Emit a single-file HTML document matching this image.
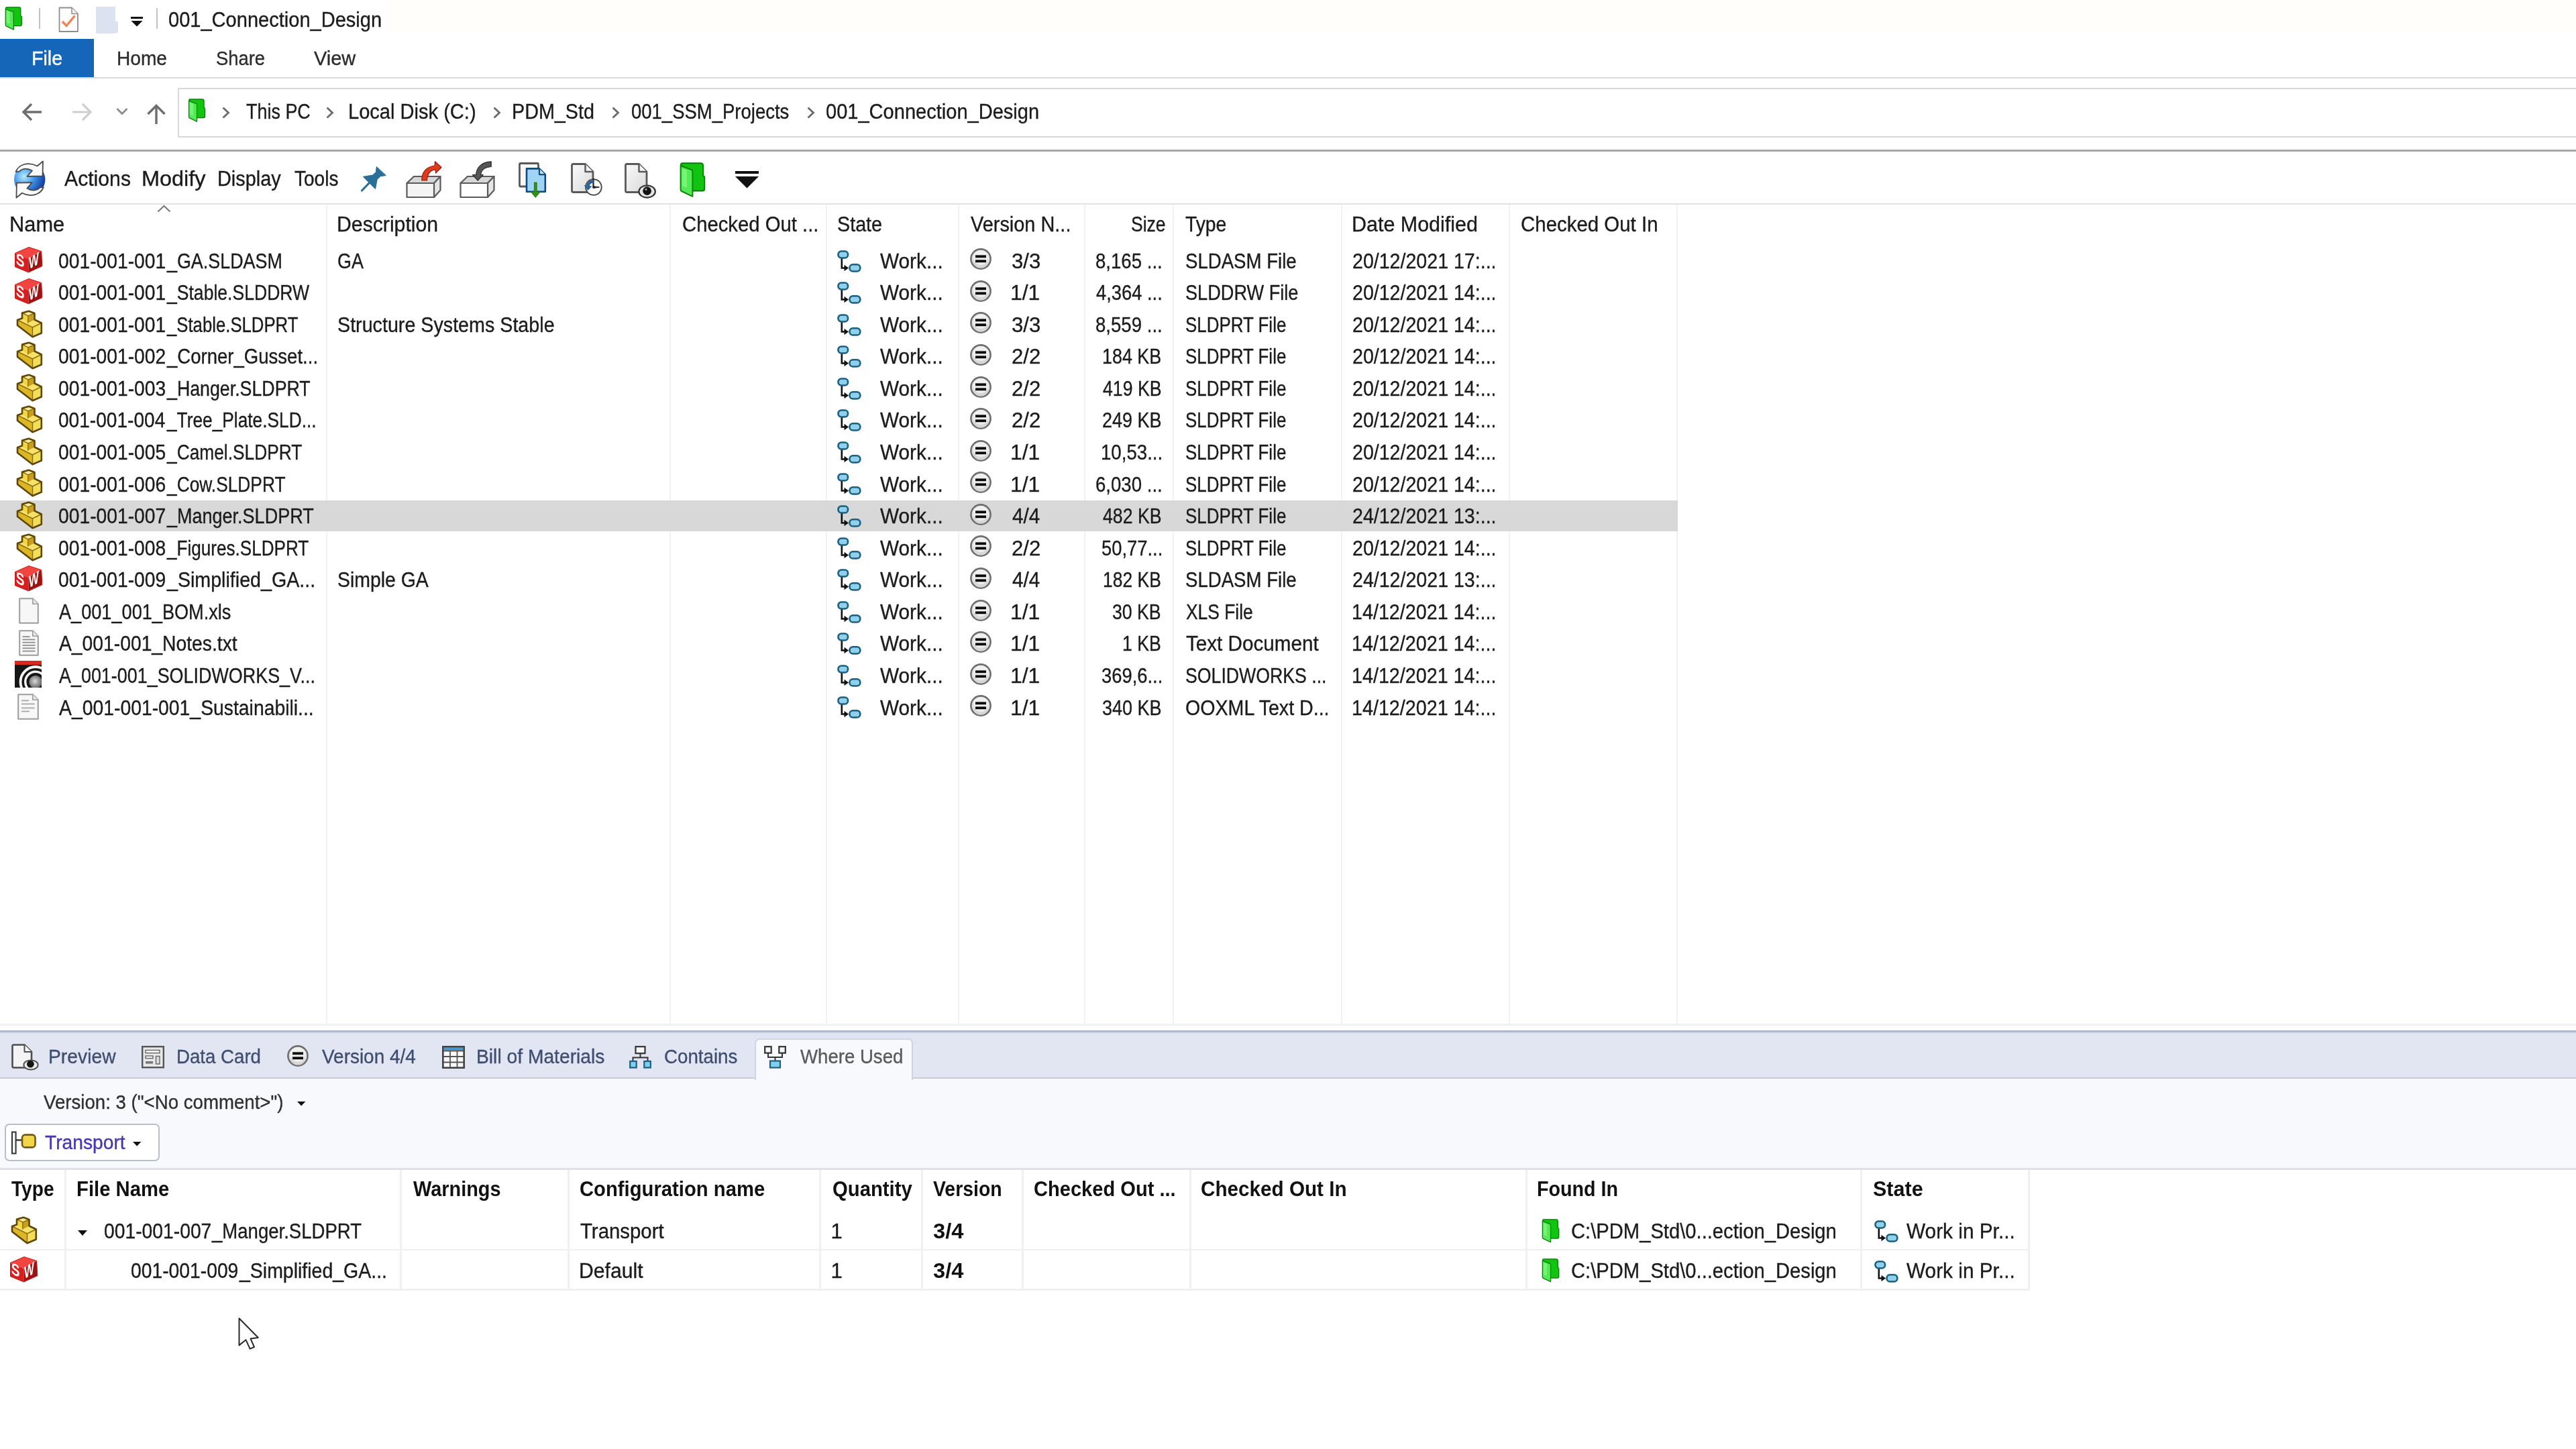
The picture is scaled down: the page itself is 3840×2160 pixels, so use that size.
<!DOCTYPE html>
<html lang="en"><head><meta charset="utf-8"><title>001_Connection_Design</title>
<style>
html,body{margin:0;padding:0;background:#fff;}
body{width:3840px;height:2160px;position:relative;overflow:hidden;font-family:"Liberation Sans", sans-serif;filter:blur(0.75px);}
div,svg,span{position:absolute;}
span{white-space:pre;line-height:1;transform-origin:0 0;-webkit-text-stroke:0.35px currentColor;}
svg{overflow:visible;}
svg text{font-family:"Liberation Sans", sans-serif;}
</style></head><body>
<div style="left:575px;top:0px;width:3265px;height:47px;background:#fffefb;"></div>
<svg style="left:6.5px;top:9.5px" width="26" height="35" viewBox="0 0 38 52"><path d="M4,1.2 H31.5 Q35,1.2 35,4.8 V19.5 L37.2,21.8 V39.5 Q37.2,42.6 34,42.6 H18 V12 L2,5.5 Q1.6,1.2 4,1.2 Z" fill="#10c410" stroke="#0a7a0a" stroke-width="2" stroke-linejoin="round"/><path d="M1.6,5 L17.6,11 Q19.4,11.8 19.4,14 V50.8 L3,43 Q1.6,42.2 1.6,40.4 Z" fill="#55ea55" stroke="#0b870b" stroke-width="2" stroke-linejoin="round"/><path d="M4,9 L11,11.8 V38 L4,35 Z" fill="#86f886" opacity="0.7"/></svg>
<div style="left:57.8px;top:12px;width:2px;height:30.5px;background:#c2c2c2;"></div>
<svg style="left:87px;top:10px" width="31" height="39" viewBox="0 0 31 39"><path d="M1.5,1.5 H20 L29,10.5 V37 H1.5 Z" fill="#fdfdfd" stroke="#8f8f8f" stroke-width="1.8" stroke-linejoin="round"/><path d="M20,1.5 V10.5 H29" fill="#f0f0f0" stroke="#8f8f8f" stroke-width="1.5"/><path d="M6,22 L12,28.5 L24.5,13.5" fill="none" stroke="#ee8558" stroke-width="3.4"/></svg>
<div style="left:143px;top:10px;width:29px;height:39.5px;background:#dde2f0;"></div>
<div style="left:167.5px;top:32.3px;width:8.2px;height:17.2px;background:#dde2f0;"></div>
<div style="left:195px;top:25px;width:18px;height:2.6px;background:#111;"></div>
<svg style="left:195px;top:31px" width="18" height="9" viewBox="0 0 18 9"><polygon points="0.5,0 17.5,0 9,8.5" fill="#111"/></svg>
<div style="left:232.8px;top:12px;width:2px;height:30.5px;background:#c2c2c2;"></div>
<div style="left:0px;top:58.4px;width:139.6px;height:56.6px;background:#1565b8;"></div>
<div style="left:0px;top:115px;width:3840px;height:2px;background:#dadada;"></div>
<div style="left:265px;top:130.5px;width:3600px;height:70.5px;border:2px solid #d9d9d9;background:#fff;box-sizing:content-box"></div>
<svg style="left:32px;top:152px" width="32" height="30" viewBox="0 0 32 30"><path d="M30,15 H3.5 M15,3 L3,15 L15,27" fill="none" stroke="#6e6e6e" stroke-width="3.4"/></svg>
<svg style="left:106px;top:152px" width="32" height="30" viewBox="0 0 32 30"><path d="M2,15 H28.5 M17,3 L29,15 L17,27" fill="none" stroke="#cfcfcf" stroke-width="3.2"/></svg>
<svg style="left:173px;top:160px" width="18" height="12" viewBox="0 0 18 12"><path d="M1.5,2 L9,9.5 L16.5,2" fill="none" stroke="#8c8c8c" stroke-width="2.8"/></svg>
<svg style="left:218px;top:154px" width="30" height="32" viewBox="0 0 30 32"><path d="M15,31 V4 M2.5,16 L15,3.5 L27.5,16" fill="none" stroke="#6e6e6e" stroke-width="3.4"/></svg>
<svg style="left:279.5px;top:147px" width="26.5" height="35" viewBox="0 0 38 52"><path d="M4,1.2 H31.5 Q35,1.2 35,4.8 V19.5 L37.2,21.8 V39.5 Q37.2,42.6 34,42.6 H18 V12 L2,5.5 Q1.6,1.2 4,1.2 Z" fill="#10c410" stroke="#0a7a0a" stroke-width="2" stroke-linejoin="round"/><path d="M1.6,5 L17.6,11 Q19.4,11.8 19.4,14 V50.8 L3,43 Q1.6,42.2 1.6,40.4 Z" fill="#55ea55" stroke="#0b870b" stroke-width="2" stroke-linejoin="round"/><path d="M4,9 L11,11.8 V38 L4,35 Z" fill="#86f886" opacity="0.7"/></svg>
<svg style="left:330.5px;top:158.5px" width="12" height="18" viewBox="0 0 12 18"><path d="M1.5,1.5 L9.5,9 L1.5,16.5" fill="none" stroke="#6a6a6a" stroke-width="2.8"/></svg>
<svg style="left:486px;top:158.5px" width="12" height="18" viewBox="0 0 12 18"><path d="M1.5,1.5 L9.5,9 L1.5,16.5" fill="none" stroke="#6a6a6a" stroke-width="2.8"/></svg>
<svg style="left:735px;top:158.5px" width="12" height="18" viewBox="0 0 12 18"><path d="M1.5,1.5 L9.5,9 L1.5,16.5" fill="none" stroke="#6a6a6a" stroke-width="2.8"/></svg>
<svg style="left:912px;top:158.5px" width="12" height="18" viewBox="0 0 12 18"><path d="M1.5,1.5 L9.5,9 L1.5,16.5" fill="none" stroke="#6a6a6a" stroke-width="2.8"/></svg>
<svg style="left:1203px;top:158.5px" width="12" height="18" viewBox="0 0 12 18"><path d="M1.5,1.5 L9.5,9 L1.5,16.5" fill="none" stroke="#6a6a6a" stroke-width="2.8"/></svg>
<div style="left:0px;top:223px;width:3840px;height:3px;background:#a8a8a8;"></div>
<svg style="left:20.3px;top:240.3px" width="48.5" height="55.3" viewBox="0 0 48.5 55.3"><defs><radialGradient id="gl" cx="0.32" cy="0.4" r="0.75"><stop offset="0" stop-color="#b8ecff"/><stop offset="0.45" stop-color="#3a94e6"/><stop offset="1" stop-color="#0c2a94"/></radialGradient></defs><circle cx="24.2" cy="27.6" r="23.2" fill="url(#gl)"/><path d="M3.5,16 C8,5 22,0.5 35.5,7.5 L44,0.5 L43.5,22.5 L20.5,23 L28,14.5 C21,10 13,11 9,15.5 Z" fill="#fbfbfb" stroke="#4a4a4a" stroke-width="1.8" stroke-linejoin="round"/><path d="M3.5,16 C8,5 22,0.5 35.5,7.5 L44,0.5 L43.5,22.5 L20.5,23 L28,14.5 C21,10 13,11 9,15.5 Z" fill="#fbfbfb" stroke="#4a4a4a" stroke-width="1.8" stroke-linejoin="round" transform="rotate(180 24.2 27.6)"/></svg>
<svg style="left:537.7px;top:247.7px" width="38" height="38" viewBox="0 0 38 38"><path d="M13.5,23.5 L1.5,36" stroke="#2a6f97" stroke-width="3.2" stroke-linecap="round"/><path d="M23.3,0.5 L37.3,13.5 L29,14.8 L24.2,19.6 L21.5,33.8 L3.3,15.4 L17.5,13 L22.3,8.6 Z" fill="#2a6f97" stroke="#2a6f97" stroke-width="1" stroke-linejoin="round"/></svg>
<svg style="left:605.2px;top:240.4px" width="54" height="55" viewBox="0 0 54 55"><polygon points="1.5,33 12,23 51.5,23 42,33" fill="#d6d6d6" stroke="#5a5a5a" stroke-width="2.2" stroke-linejoin="round"/><polygon points="42,33 51.5,23 51.5,43.5 42,54" fill="#e6e6e6" stroke="#5a5a5a" stroke-width="2.2" stroke-linejoin="round"/><polygon points="1.5,33 42,33 42,54 1.5,54" fill="#f4f4f4" stroke="#5a5a5a" stroke-width="2.2" stroke-linejoin="round"/><path d="M23.8,29 C23.5,17 30,8.5 43,7 L43.5,0.8 L53,9.5 L44.5,18 L44,12.8 C36,13.5 32,19 31.5,29 Z" fill="#e03a1c" stroke="#8e1e0c" stroke-width="1.2" stroke-linejoin="round"/></svg>
<svg style="left:685.3px;top:240.4px" width="54" height="55" viewBox="0 0 54 55"><polygon points="1.5,33 12,23 51.5,23 42,33" fill="#d6d6d6" stroke="#5a5a5a" stroke-width="2.2" stroke-linejoin="round"/><polygon points="42,33 51.5,23 51.5,43.5 42,54" fill="#e6e6e6" stroke="#5a5a5a" stroke-width="2.2" stroke-linejoin="round"/><polygon points="1.5,33 42,33 42,54 1.5,54" fill="#ffffff" stroke="#5a5a5a" stroke-width="2.2" stroke-linejoin="round"/><path d="M47.2,0.8 C34,1 25.5,9 24.5,20.5 L19.5,20.5 L27.2,29 L35.2,20.5 L31.5,20.5 C32.5,13.5 38,9 47.2,8.5 Z" fill="#555" stroke="#2c2c2c" stroke-width="1.2" stroke-linejoin="round"/></svg>
<svg style="left:772.5px;top:242px" width="41.5" height="53" viewBox="0 0 41.5 53"><rect x="1.5" y="1.5" width="28" height="34.5" rx="1.5" fill="#f7f7f7" stroke="#585858" stroke-width="2.8"/><path d="M12,9.4 H31 L39.8,18.2 V43.8 H12 Z" fill="#9fd4f5" stroke="#0d4c7c" stroke-width="2.6" stroke-linejoin="round"/><path d="M31,9.4 V18.2 H39.8" fill="#c9e8fa" stroke="#0d4c7c" stroke-width="2.2" stroke-linejoin="round"/><path d="M23.4,30 H27.2 V44 H32.4 L25.3,52.4 L18.2,44 H23.4 Z" fill="#2f9212" stroke="#246f0e" stroke-width="0.8"/></svg>
<svg style="left:851px;top:242.5px" width="48" height="52" viewBox="0 0 48 52"><defs><linearGradient id="dg" x1="0" y1="0" x2="1" y2="1"><stop offset="0" stop-color="#fafafa"/><stop offset="1" stop-color="#d9d9d9"/></linearGradient></defs><path d="M3.5,1.5 H21.5 L33,13 V41 Q33,43.5 30.5,43.5 H3.5 Q1.5,43.5 1.5,41.5 V3.5 Q1.5,1.5 3.5,1.5 Z" fill="url(#dg)" stroke="#595959" stroke-width="2.8" stroke-linejoin="round"/><path d="M21.5,1.5 V13 H33" fill="#f4f4f4" stroke="#595959" stroke-width="2.4" stroke-linejoin="round"/><circle cx="33.9" cy="36" r="11.8" fill="#fdfdfd" stroke="#4c4c4c" stroke-width="2"/><path d="M33.5,23 V36.5" fill="none" stroke="#222" stroke-width="2.2"/><path d="M33,34.6 L42.5,36 L33,37.6 Z" fill="#222" stroke="#222" stroke-width="1"/><path d="M33.5,25.5 C28.5,25 24.5,28.5 23.5,33.5 L19.5,33 L25.5,41 L31.5,34.5 L27.8,34 C28.3,31.5 30.5,29.8 33.5,29.8 Z" fill="#2a6498"/></svg>
<svg style="left:931px;top:242.5px" width="48" height="53" viewBox="0 0 48 53"><defs><linearGradient id="dg2" x1="0" y1="0" x2="1" y2="1"><stop offset="0" stop-color="#fafafa"/><stop offset="1" stop-color="#d9d9d9"/></linearGradient></defs><path d="M3.5,1.5 H21.5 L33,13 V41 Q33,43.5 30.5,43.5 H3.5 Q1.5,43.5 1.5,41.5 V3.5 Q1.5,1.5 3.5,1.5 Z" fill="url(#dg2)" stroke="#595959" stroke-width="2.8" stroke-linejoin="round"/><path d="M21.5,1.5 V13 H33" fill="#f4f4f4" stroke="#595959" stroke-width="2.4" stroke-linejoin="round"/><ellipse cx="33.6" cy="42.5" rx="12.2" ry="9" fill="#f4f4f4" stroke="#3c3c3c" stroke-width="2.4"/><ellipse cx="33.6" cy="42.5" rx="9.5" ry="6.2" fill="#e0e0e0"/><circle cx="33.6" cy="41.6" r="6.3" fill="#111"/><circle cx="32" cy="39.4" r="1.6" fill="#999"/></svg>
<svg style="left:1012.7px;top:242.1px" width="38" height="52" viewBox="0 0 38 52"><path d="M4,1.2 H31.5 Q35,1.2 35,4.8 V19.5 L37.2,21.8 V39.5 Q37.2,42.6 34,42.6 H18 V12 L2,5.5 Q1.6,1.2 4,1.2 Z" fill="#10c410" stroke="#0a7a0a" stroke-width="2" stroke-linejoin="round"/><path d="M1.6,5 L17.6,11 Q19.4,11.8 19.4,14 V50.8 L3,43 Q1.6,42.2 1.6,40.4 Z" fill="#55ea55" stroke="#0b870b" stroke-width="2" stroke-linejoin="round"/><path d="M4,9 L11,11.8 V38 L4,35 Z" fill="#86f886" opacity="0.7"/></svg>
<div style="left:1096px;top:255px;width:35px;height:3.6px;background:#111;"></div>
<svg style="left:1096px;top:262.8px" width="35" height="17.5" viewBox="0 0 35 17.5"><polygon points="0,0 35,0 17.5,17.5" fill="#111"/></svg>
<div style="left:0px;top:302.6px;width:3840px;height:2px;background:#e3e3e3;"></div>
<div style="left:485.5px;top:305px;width:2px;height:1221px;background:#f1f1f6;"></div>
<div style="left:997.5px;top:305px;width:2px;height:1221px;background:#f1f1f6;"></div>
<div style="left:1230.5px;top:305px;width:2px;height:1221px;background:#f1f1f6;"></div>
<div style="left:1428px;top:305px;width:2px;height:1221px;background:#f1f1f6;"></div>
<div style="left:1615.5px;top:305px;width:2px;height:1221px;background:#f1f1f6;"></div>
<div style="left:1748px;top:305px;width:2px;height:1221px;background:#f1f1f6;"></div>
<div style="left:1998.5px;top:305px;width:2px;height:1221px;background:#f1f1f6;"></div>
<div style="left:2248.5px;top:305px;width:2px;height:1221px;background:#f1f1f6;"></div>
<div style="left:2498.5px;top:305px;width:2px;height:1221px;background:#f1f1f6;"></div>
<svg style="left:234px;top:305px" width="21" height="12" viewBox="0 0 21 12"><path d="M1.5,10.5 L10.5,2 L19.5,10.5" fill="none" stroke="#7a7a7a" stroke-width="2.2"/></svg>
<div style="left:0px;top:745.6px;width:2501px;height:46.8px;background:#d8d8d8;"></div>
<svg style="left:22px;top:367.70000000000005px" width="41.5" height="38.7" viewBox="0 0 41.5 38.7"><polygon points="0.5,9.4 21,0.5 39.7,6.6 20.4,17.7" fill="#f2453f"/><polygon points="0.5,9.4 20.4,17.7 20.4,38 0.5,29.8" fill="#d81e1e"/><polygon points="20.4,17.7 39.7,6.6 40.8,28.7 20.4,38" fill="#9e1212"/><polygon points="0.5,9.4 21,0.5 39.7,6.6 40.8,28.7 20.4,38 0.5,29.8" fill="none" stroke="#c41a1a" stroke-width="1" stroke-linejoin="round"/><text x="2.2" y="26.5" font-size="24.5" font-weight="700" fill="#fff" transform="matrix(0.78,0.33,0,1,0,-1.5)">S</text><text x="26.5" y="42.8" font-size="25.5" font-weight="700" fill="#fff" transform="matrix(0.62,-0.36,0,1,4.6,0.5)">W</text></svg>
<svg style="left:1248.2px;top:372.5px" width="36" height="33" viewBox="0 0 36 33"><path d="M6.8,12 V26.5 H12" fill="none" stroke="#111" stroke-width="2.6"/><polygon points="10.5,21.8 17,26.5 10.5,31.2" fill="#111"/><rect x="1.5" y="1.5" width="14.5" height="10" rx="4.5" ry="4.5" fill="#8fd0ec" stroke="#1d607e" stroke-width="2.6"/><rect x="18.5" y="21.2" width="15.8" height="10.3" rx="4.8" ry="4.8" fill="#8fd0ec" stroke="#1d607e" stroke-width="2.6"/></svg>
<svg style="left:1446.2px;top:370.3px" width="32" height="32" viewBox="0 0 32 32"><circle cx="16.0" cy="16.0" r="14.6" fill="#e4e4e4" stroke="#6f6f6f" stroke-width="2.6"/><circle cx="16.0" cy="19.0" r="11.0" fill="#cfcfcf" opacity="0.6"/><circle cx="16.0" cy="14.0" r="11.0" fill="#f2f2f2" opacity="0.8"/><rect x="8.0" y="10.4" width="16" height="3.8" fill="#0a0a0a"/><rect x="8.0" y="17.4" width="16" height="3.8" fill="#0a0a0a"/></svg>
<svg style="left:22px;top:415.27000000000004px" width="41.5" height="38.7" viewBox="0 0 41.5 38.7"><polygon points="0.5,9.4 21,0.5 39.7,6.6 20.4,17.7" fill="#f2453f"/><polygon points="0.5,9.4 20.4,17.7 20.4,38 0.5,29.8" fill="#d81e1e"/><polygon points="20.4,17.7 39.7,6.6 40.8,28.7 20.4,38" fill="#9e1212"/><polygon points="0.5,9.4 21,0.5 39.7,6.6 40.8,28.7 20.4,38 0.5,29.8" fill="none" stroke="#c41a1a" stroke-width="1" stroke-linejoin="round"/><text x="2.2" y="26.5" font-size="24.5" font-weight="700" fill="#fff" transform="matrix(0.78,0.33,0,1,0,-1.5)">S</text><text x="26.5" y="42.8" font-size="25.5" font-weight="700" fill="#fff" transform="matrix(0.62,-0.36,0,1,4.6,0.5)">W</text></svg>
<svg style="left:1248.2px;top:420.07px" width="36" height="33" viewBox="0 0 36 33"><path d="M6.8,12 V26.5 H12" fill="none" stroke="#111" stroke-width="2.6"/><polygon points="10.5,21.8 17,26.5 10.5,31.2" fill="#111"/><rect x="1.5" y="1.5" width="14.5" height="10" rx="4.5" ry="4.5" fill="#8fd0ec" stroke="#1d607e" stroke-width="2.6"/><rect x="18.5" y="21.2" width="15.8" height="10.3" rx="4.8" ry="4.8" fill="#8fd0ec" stroke="#1d607e" stroke-width="2.6"/></svg>
<svg style="left:1446.2px;top:417.87px" width="32" height="32" viewBox="0 0 32 32"><circle cx="16.0" cy="16.0" r="14.6" fill="#e4e4e4" stroke="#6f6f6f" stroke-width="2.6"/><circle cx="16.0" cy="19.0" r="11.0" fill="#cfcfcf" opacity="0.6"/><circle cx="16.0" cy="14.0" r="11.0" fill="#f2f2f2" opacity="0.8"/><rect x="8.0" y="10.4" width="16" height="3.8" fill="#0a0a0a"/><rect x="8.0" y="17.4" width="16" height="3.8" fill="#0a0a0a"/></svg>
<svg style="left:24.6px;top:462.64px" width="38" height="40" viewBox="0 0 38 40"><polygon points="8,3.5 18,0.8 26.5,4 26.5,13.5 36.8,18.5 36.8,33.5 23.5,39.2 1,22 1,14 8,11.5" fill="#e6c52c"/><polygon points="8,3.5 18,0.8 26.5,4 16.8,7.8" fill="#f8ec9a"/><polygon points="16.8,7.8 26.5,4 26.5,13.5 16.8,18.5" fill="#c99e1a"/><polygon points="8,3.5 16.8,7.8 16.8,18.5 8,13" fill="#f0d545"/><polygon points="1,14 8,12 16.8,18.5 26.5,13.5 36.8,18.5 23.5,25" fill="#f5e26a"/><polygon points="23.5,25 36.8,18.5 36.8,33.5 23.5,39.2" fill="#f3de58"/><polygon points="1,14 23.5,25 23.5,39.2 1,22" fill="#dcb625"/><path d="M23.5,25 L23.5,39 M1,14 L23.5,25 L36.8,18.5 M16.8,7.8 L16.8,18.5 M8,3.5 L16.8,7.8 L26.5,4" fill="none" stroke="#8a6a10" stroke-width="1.4"/><polygon points="8,3.5 18,0.8 26.5,4 26.5,13.5 36.8,18.5 36.8,33.5 23.5,39.2 1,22 1,14 8,11.5" fill="none" stroke="#5f4708" stroke-width="2.6" stroke-linejoin="round"/></svg>
<svg style="left:1248.2px;top:467.64px" width="36" height="33" viewBox="0 0 36 33"><path d="M6.8,12 V26.5 H12" fill="none" stroke="#111" stroke-width="2.6"/><polygon points="10.5,21.8 17,26.5 10.5,31.2" fill="#111"/><rect x="1.5" y="1.5" width="14.5" height="10" rx="4.5" ry="4.5" fill="#8fd0ec" stroke="#1d607e" stroke-width="2.6"/><rect x="18.5" y="21.2" width="15.8" height="10.3" rx="4.8" ry="4.8" fill="#8fd0ec" stroke="#1d607e" stroke-width="2.6"/></svg>
<svg style="left:1446.2px;top:465.44px" width="32" height="32" viewBox="0 0 32 32"><circle cx="16.0" cy="16.0" r="14.6" fill="#e4e4e4" stroke="#6f6f6f" stroke-width="2.6"/><circle cx="16.0" cy="19.0" r="11.0" fill="#cfcfcf" opacity="0.6"/><circle cx="16.0" cy="14.0" r="11.0" fill="#f2f2f2" opacity="0.8"/><rect x="8.0" y="10.4" width="16" height="3.8" fill="#0a0a0a"/><rect x="8.0" y="17.4" width="16" height="3.8" fill="#0a0a0a"/></svg>
<svg style="left:24.6px;top:510.2099999999999px" width="38" height="40" viewBox="0 0 38 40"><polygon points="8,3.5 18,0.8 26.5,4 26.5,13.5 36.8,18.5 36.8,33.5 23.5,39.2 1,22 1,14 8,11.5" fill="#e6c52c"/><polygon points="8,3.5 18,0.8 26.5,4 16.8,7.8" fill="#f8ec9a"/><polygon points="16.8,7.8 26.5,4 26.5,13.5 16.8,18.5" fill="#c99e1a"/><polygon points="8,3.5 16.8,7.8 16.8,18.5 8,13" fill="#f0d545"/><polygon points="1,14 8,12 16.8,18.5 26.5,13.5 36.8,18.5 23.5,25" fill="#f5e26a"/><polygon points="23.5,25 36.8,18.5 36.8,33.5 23.5,39.2" fill="#f3de58"/><polygon points="1,14 23.5,25 23.5,39.2 1,22" fill="#dcb625"/><path d="M23.5,25 L23.5,39 M1,14 L23.5,25 L36.8,18.5 M16.8,7.8 L16.8,18.5 M8,3.5 L16.8,7.8 L26.5,4" fill="none" stroke="#8a6a10" stroke-width="1.4"/><polygon points="8,3.5 18,0.8 26.5,4 26.5,13.5 36.8,18.5 36.8,33.5 23.5,39.2 1,22 1,14 8,11.5" fill="none" stroke="#5f4708" stroke-width="2.6" stroke-linejoin="round"/></svg>
<svg style="left:1248.2px;top:515.2099999999999px" width="36" height="33" viewBox="0 0 36 33"><path d="M6.8,12 V26.5 H12" fill="none" stroke="#111" stroke-width="2.6"/><polygon points="10.5,21.8 17,26.5 10.5,31.2" fill="#111"/><rect x="1.5" y="1.5" width="14.5" height="10" rx="4.5" ry="4.5" fill="#8fd0ec" stroke="#1d607e" stroke-width="2.6"/><rect x="18.5" y="21.2" width="15.8" height="10.3" rx="4.8" ry="4.8" fill="#8fd0ec" stroke="#1d607e" stroke-width="2.6"/></svg>
<svg style="left:1446.2px;top:513.01px" width="32" height="32" viewBox="0 0 32 32"><circle cx="16.0" cy="16.0" r="14.6" fill="#e4e4e4" stroke="#6f6f6f" stroke-width="2.6"/><circle cx="16.0" cy="19.0" r="11.0" fill="#cfcfcf" opacity="0.6"/><circle cx="16.0" cy="14.0" r="11.0" fill="#f2f2f2" opacity="0.8"/><rect x="8.0" y="10.4" width="16" height="3.8" fill="#0a0a0a"/><rect x="8.0" y="17.4" width="16" height="3.8" fill="#0a0a0a"/></svg>
<svg style="left:24.6px;top:557.78px" width="38" height="40" viewBox="0 0 38 40"><polygon points="8,3.5 18,0.8 26.5,4 26.5,13.5 36.8,18.5 36.8,33.5 23.5,39.2 1,22 1,14 8,11.5" fill="#e6c52c"/><polygon points="8,3.5 18,0.8 26.5,4 16.8,7.8" fill="#f8ec9a"/><polygon points="16.8,7.8 26.5,4 26.5,13.5 16.8,18.5" fill="#c99e1a"/><polygon points="8,3.5 16.8,7.8 16.8,18.5 8,13" fill="#f0d545"/><polygon points="1,14 8,12 16.8,18.5 26.5,13.5 36.8,18.5 23.5,25" fill="#f5e26a"/><polygon points="23.5,25 36.8,18.5 36.8,33.5 23.5,39.2" fill="#f3de58"/><polygon points="1,14 23.5,25 23.5,39.2 1,22" fill="#dcb625"/><path d="M23.5,25 L23.5,39 M1,14 L23.5,25 L36.8,18.5 M16.8,7.8 L16.8,18.5 M8,3.5 L16.8,7.8 L26.5,4" fill="none" stroke="#8a6a10" stroke-width="1.4"/><polygon points="8,3.5 18,0.8 26.5,4 26.5,13.5 36.8,18.5 36.8,33.5 23.5,39.2 1,22 1,14 8,11.5" fill="none" stroke="#5f4708" stroke-width="2.6" stroke-linejoin="round"/></svg>
<svg style="left:1248.2px;top:562.78px" width="36" height="33" viewBox="0 0 36 33"><path d="M6.8,12 V26.5 H12" fill="none" stroke="#111" stroke-width="2.6"/><polygon points="10.5,21.8 17,26.5 10.5,31.2" fill="#111"/><rect x="1.5" y="1.5" width="14.5" height="10" rx="4.5" ry="4.5" fill="#8fd0ec" stroke="#1d607e" stroke-width="2.6"/><rect x="18.5" y="21.2" width="15.8" height="10.3" rx="4.8" ry="4.8" fill="#8fd0ec" stroke="#1d607e" stroke-width="2.6"/></svg>
<svg style="left:1446.2px;top:560.58px" width="32" height="32" viewBox="0 0 32 32"><circle cx="16.0" cy="16.0" r="14.6" fill="#e4e4e4" stroke="#6f6f6f" stroke-width="2.6"/><circle cx="16.0" cy="19.0" r="11.0" fill="#cfcfcf" opacity="0.6"/><circle cx="16.0" cy="14.0" r="11.0" fill="#f2f2f2" opacity="0.8"/><rect x="8.0" y="10.4" width="16" height="3.8" fill="#0a0a0a"/><rect x="8.0" y="17.4" width="16" height="3.8" fill="#0a0a0a"/></svg>
<svg style="left:24.6px;top:605.3499999999999px" width="38" height="40" viewBox="0 0 38 40"><polygon points="8,3.5 18,0.8 26.5,4 26.5,13.5 36.8,18.5 36.8,33.5 23.5,39.2 1,22 1,14 8,11.5" fill="#e6c52c"/><polygon points="8,3.5 18,0.8 26.5,4 16.8,7.8" fill="#f8ec9a"/><polygon points="16.8,7.8 26.5,4 26.5,13.5 16.8,18.5" fill="#c99e1a"/><polygon points="8,3.5 16.8,7.8 16.8,18.5 8,13" fill="#f0d545"/><polygon points="1,14 8,12 16.8,18.5 26.5,13.5 36.8,18.5 23.5,25" fill="#f5e26a"/><polygon points="23.5,25 36.8,18.5 36.8,33.5 23.5,39.2" fill="#f3de58"/><polygon points="1,14 23.5,25 23.5,39.2 1,22" fill="#dcb625"/><path d="M23.5,25 L23.5,39 M1,14 L23.5,25 L36.8,18.5 M16.8,7.8 L16.8,18.5 M8,3.5 L16.8,7.8 L26.5,4" fill="none" stroke="#8a6a10" stroke-width="1.4"/><polygon points="8,3.5 18,0.8 26.5,4 26.5,13.5 36.8,18.5 36.8,33.5 23.5,39.2 1,22 1,14 8,11.5" fill="none" stroke="#5f4708" stroke-width="2.6" stroke-linejoin="round"/></svg>
<svg style="left:1248.2px;top:610.3499999999999px" width="36" height="33" viewBox="0 0 36 33"><path d="M6.8,12 V26.5 H12" fill="none" stroke="#111" stroke-width="2.6"/><polygon points="10.5,21.8 17,26.5 10.5,31.2" fill="#111"/><rect x="1.5" y="1.5" width="14.5" height="10" rx="4.5" ry="4.5" fill="#8fd0ec" stroke="#1d607e" stroke-width="2.6"/><rect x="18.5" y="21.2" width="15.8" height="10.3" rx="4.8" ry="4.8" fill="#8fd0ec" stroke="#1d607e" stroke-width="2.6"/></svg>
<svg style="left:1446.2px;top:608.15px" width="32" height="32" viewBox="0 0 32 32"><circle cx="16.0" cy="16.0" r="14.6" fill="#e4e4e4" stroke="#6f6f6f" stroke-width="2.6"/><circle cx="16.0" cy="19.0" r="11.0" fill="#cfcfcf" opacity="0.6"/><circle cx="16.0" cy="14.0" r="11.0" fill="#f2f2f2" opacity="0.8"/><rect x="8.0" y="10.4" width="16" height="3.8" fill="#0a0a0a"/><rect x="8.0" y="17.4" width="16" height="3.8" fill="#0a0a0a"/></svg>
<svg style="left:24.6px;top:652.92px" width="38" height="40" viewBox="0 0 38 40"><polygon points="8,3.5 18,0.8 26.5,4 26.5,13.5 36.8,18.5 36.8,33.5 23.5,39.2 1,22 1,14 8,11.5" fill="#e6c52c"/><polygon points="8,3.5 18,0.8 26.5,4 16.8,7.8" fill="#f8ec9a"/><polygon points="16.8,7.8 26.5,4 26.5,13.5 16.8,18.5" fill="#c99e1a"/><polygon points="8,3.5 16.8,7.8 16.8,18.5 8,13" fill="#f0d545"/><polygon points="1,14 8,12 16.8,18.5 26.5,13.5 36.8,18.5 23.5,25" fill="#f5e26a"/><polygon points="23.5,25 36.8,18.5 36.8,33.5 23.5,39.2" fill="#f3de58"/><polygon points="1,14 23.5,25 23.5,39.2 1,22" fill="#dcb625"/><path d="M23.5,25 L23.5,39 M1,14 L23.5,25 L36.8,18.5 M16.8,7.8 L16.8,18.5 M8,3.5 L16.8,7.8 L26.5,4" fill="none" stroke="#8a6a10" stroke-width="1.4"/><polygon points="8,3.5 18,0.8 26.5,4 26.5,13.5 36.8,18.5 36.8,33.5 23.5,39.2 1,22 1,14 8,11.5" fill="none" stroke="#5f4708" stroke-width="2.6" stroke-linejoin="round"/></svg>
<svg style="left:1248.2px;top:657.92px" width="36" height="33" viewBox="0 0 36 33"><path d="M6.8,12 V26.5 H12" fill="none" stroke="#111" stroke-width="2.6"/><polygon points="10.5,21.8 17,26.5 10.5,31.2" fill="#111"/><rect x="1.5" y="1.5" width="14.5" height="10" rx="4.5" ry="4.5" fill="#8fd0ec" stroke="#1d607e" stroke-width="2.6"/><rect x="18.5" y="21.2" width="15.8" height="10.3" rx="4.8" ry="4.8" fill="#8fd0ec" stroke="#1d607e" stroke-width="2.6"/></svg>
<svg style="left:1446.2px;top:655.72px" width="32" height="32" viewBox="0 0 32 32"><circle cx="16.0" cy="16.0" r="14.6" fill="#e4e4e4" stroke="#6f6f6f" stroke-width="2.6"/><circle cx="16.0" cy="19.0" r="11.0" fill="#cfcfcf" opacity="0.6"/><circle cx="16.0" cy="14.0" r="11.0" fill="#f2f2f2" opacity="0.8"/><rect x="8.0" y="10.4" width="16" height="3.8" fill="#0a0a0a"/><rect x="8.0" y="17.4" width="16" height="3.8" fill="#0a0a0a"/></svg>
<svg style="left:24.6px;top:700.4899999999999px" width="38" height="40" viewBox="0 0 38 40"><polygon points="8,3.5 18,0.8 26.5,4 26.5,13.5 36.8,18.5 36.8,33.5 23.5,39.2 1,22 1,14 8,11.5" fill="#e6c52c"/><polygon points="8,3.5 18,0.8 26.5,4 16.8,7.8" fill="#f8ec9a"/><polygon points="16.8,7.8 26.5,4 26.5,13.5 16.8,18.5" fill="#c99e1a"/><polygon points="8,3.5 16.8,7.8 16.8,18.5 8,13" fill="#f0d545"/><polygon points="1,14 8,12 16.8,18.5 26.5,13.5 36.8,18.5 23.5,25" fill="#f5e26a"/><polygon points="23.5,25 36.8,18.5 36.8,33.5 23.5,39.2" fill="#f3de58"/><polygon points="1,14 23.5,25 23.5,39.2 1,22" fill="#dcb625"/><path d="M23.5,25 L23.5,39 M1,14 L23.5,25 L36.8,18.5 M16.8,7.8 L16.8,18.5 M8,3.5 L16.8,7.8 L26.5,4" fill="none" stroke="#8a6a10" stroke-width="1.4"/><polygon points="8,3.5 18,0.8 26.5,4 26.5,13.5 36.8,18.5 36.8,33.5 23.5,39.2 1,22 1,14 8,11.5" fill="none" stroke="#5f4708" stroke-width="2.6" stroke-linejoin="round"/></svg>
<svg style="left:1248.2px;top:705.4899999999999px" width="36" height="33" viewBox="0 0 36 33"><path d="M6.8,12 V26.5 H12" fill="none" stroke="#111" stroke-width="2.6"/><polygon points="10.5,21.8 17,26.5 10.5,31.2" fill="#111"/><rect x="1.5" y="1.5" width="14.5" height="10" rx="4.5" ry="4.5" fill="#8fd0ec" stroke="#1d607e" stroke-width="2.6"/><rect x="18.5" y="21.2" width="15.8" height="10.3" rx="4.8" ry="4.8" fill="#8fd0ec" stroke="#1d607e" stroke-width="2.6"/></svg>
<svg style="left:1446.2px;top:703.29px" width="32" height="32" viewBox="0 0 32 32"><circle cx="16.0" cy="16.0" r="14.6" fill="#e4e4e4" stroke="#6f6f6f" stroke-width="2.6"/><circle cx="16.0" cy="19.0" r="11.0" fill="#cfcfcf" opacity="0.6"/><circle cx="16.0" cy="14.0" r="11.0" fill="#f2f2f2" opacity="0.8"/><rect x="8.0" y="10.4" width="16" height="3.8" fill="#0a0a0a"/><rect x="8.0" y="17.4" width="16" height="3.8" fill="#0a0a0a"/></svg>
<svg style="left:24.6px;top:748.06px" width="38" height="40" viewBox="0 0 38 40"><polygon points="8,3.5 18,0.8 26.5,4 26.5,13.5 36.8,18.5 36.8,33.5 23.5,39.2 1,22 1,14 8,11.5" fill="#e6c52c"/><polygon points="8,3.5 18,0.8 26.5,4 16.8,7.8" fill="#f8ec9a"/><polygon points="16.8,7.8 26.5,4 26.5,13.5 16.8,18.5" fill="#c99e1a"/><polygon points="8,3.5 16.8,7.8 16.8,18.5 8,13" fill="#f0d545"/><polygon points="1,14 8,12 16.8,18.5 26.5,13.5 36.8,18.5 23.5,25" fill="#f5e26a"/><polygon points="23.5,25 36.8,18.5 36.8,33.5 23.5,39.2" fill="#f3de58"/><polygon points="1,14 23.5,25 23.5,39.2 1,22" fill="#dcb625"/><path d="M23.5,25 L23.5,39 M1,14 L23.5,25 L36.8,18.5 M16.8,7.8 L16.8,18.5 M8,3.5 L16.8,7.8 L26.5,4" fill="none" stroke="#8a6a10" stroke-width="1.4"/><polygon points="8,3.5 18,0.8 26.5,4 26.5,13.5 36.8,18.5 36.8,33.5 23.5,39.2 1,22 1,14 8,11.5" fill="none" stroke="#5f4708" stroke-width="2.6" stroke-linejoin="round"/></svg>
<svg style="left:1248.2px;top:753.06px" width="36" height="33" viewBox="0 0 36 33"><path d="M6.8,12 V26.5 H12" fill="none" stroke="#111" stroke-width="2.6"/><polygon points="10.5,21.8 17,26.5 10.5,31.2" fill="#111"/><rect x="1.5" y="1.5" width="14.5" height="10" rx="4.5" ry="4.5" fill="#8fd0ec" stroke="#1d607e" stroke-width="2.6"/><rect x="18.5" y="21.2" width="15.8" height="10.3" rx="4.8" ry="4.8" fill="#8fd0ec" stroke="#1d607e" stroke-width="2.6"/></svg>
<svg style="left:1446.2px;top:750.86px" width="32" height="32" viewBox="0 0 32 32"><circle cx="16.0" cy="16.0" r="14.6" fill="#e4e4e4" stroke="#6f6f6f" stroke-width="2.6"/><circle cx="16.0" cy="19.0" r="11.0" fill="#cfcfcf" opacity="0.6"/><circle cx="16.0" cy="14.0" r="11.0" fill="#f2f2f2" opacity="0.8"/><rect x="8.0" y="10.4" width="16" height="3.8" fill="#0a0a0a"/><rect x="8.0" y="17.4" width="16" height="3.8" fill="#0a0a0a"/></svg>
<svg style="left:24.6px;top:795.63px" width="38" height="40" viewBox="0 0 38 40"><polygon points="8,3.5 18,0.8 26.5,4 26.5,13.5 36.8,18.5 36.8,33.5 23.5,39.2 1,22 1,14 8,11.5" fill="#e6c52c"/><polygon points="8,3.5 18,0.8 26.5,4 16.8,7.8" fill="#f8ec9a"/><polygon points="16.8,7.8 26.5,4 26.5,13.5 16.8,18.5" fill="#c99e1a"/><polygon points="8,3.5 16.8,7.8 16.8,18.5 8,13" fill="#f0d545"/><polygon points="1,14 8,12 16.8,18.5 26.5,13.5 36.8,18.5 23.5,25" fill="#f5e26a"/><polygon points="23.5,25 36.8,18.5 36.8,33.5 23.5,39.2" fill="#f3de58"/><polygon points="1,14 23.5,25 23.5,39.2 1,22" fill="#dcb625"/><path d="M23.5,25 L23.5,39 M1,14 L23.5,25 L36.8,18.5 M16.8,7.8 L16.8,18.5 M8,3.5 L16.8,7.8 L26.5,4" fill="none" stroke="#8a6a10" stroke-width="1.4"/><polygon points="8,3.5 18,0.8 26.5,4 26.5,13.5 36.8,18.5 36.8,33.5 23.5,39.2 1,22 1,14 8,11.5" fill="none" stroke="#5f4708" stroke-width="2.6" stroke-linejoin="round"/></svg>
<svg style="left:1248.2px;top:800.63px" width="36" height="33" viewBox="0 0 36 33"><path d="M6.8,12 V26.5 H12" fill="none" stroke="#111" stroke-width="2.6"/><polygon points="10.5,21.8 17,26.5 10.5,31.2" fill="#111"/><rect x="1.5" y="1.5" width="14.5" height="10" rx="4.5" ry="4.5" fill="#8fd0ec" stroke="#1d607e" stroke-width="2.6"/><rect x="18.5" y="21.2" width="15.8" height="10.3" rx="4.8" ry="4.8" fill="#8fd0ec" stroke="#1d607e" stroke-width="2.6"/></svg>
<svg style="left:1446.2px;top:798.4300000000001px" width="32" height="32" viewBox="0 0 32 32"><circle cx="16.0" cy="16.0" r="14.6" fill="#e4e4e4" stroke="#6f6f6f" stroke-width="2.6"/><circle cx="16.0" cy="19.0" r="11.0" fill="#cfcfcf" opacity="0.6"/><circle cx="16.0" cy="14.0" r="11.0" fill="#f2f2f2" opacity="0.8"/><rect x="8.0" y="10.4" width="16" height="3.8" fill="#0a0a0a"/><rect x="8.0" y="17.4" width="16" height="3.8" fill="#0a0a0a"/></svg>
<svg style="left:22px;top:843.4px" width="41.5" height="38.7" viewBox="0 0 41.5 38.7"><polygon points="0.5,9.4 21,0.5 39.7,6.6 20.4,17.7" fill="#f2453f"/><polygon points="0.5,9.4 20.4,17.7 20.4,38 0.5,29.8" fill="#d81e1e"/><polygon points="20.4,17.7 39.7,6.6 40.8,28.7 20.4,38" fill="#9e1212"/><polygon points="0.5,9.4 21,0.5 39.7,6.6 40.8,28.7 20.4,38 0.5,29.8" fill="none" stroke="#c41a1a" stroke-width="1" stroke-linejoin="round"/><text x="2.2" y="26.5" font-size="24.5" font-weight="700" fill="#fff" transform="matrix(0.78,0.33,0,1,0,-1.5)">S</text><text x="26.5" y="42.8" font-size="25.5" font-weight="700" fill="#fff" transform="matrix(0.62,-0.36,0,1,4.6,0.5)">W</text></svg>
<svg style="left:1248.2px;top:848.1999999999999px" width="36" height="33" viewBox="0 0 36 33"><path d="M6.8,12 V26.5 H12" fill="none" stroke="#111" stroke-width="2.6"/><polygon points="10.5,21.8 17,26.5 10.5,31.2" fill="#111"/><rect x="1.5" y="1.5" width="14.5" height="10" rx="4.5" ry="4.5" fill="#8fd0ec" stroke="#1d607e" stroke-width="2.6"/><rect x="18.5" y="21.2" width="15.8" height="10.3" rx="4.8" ry="4.8" fill="#8fd0ec" stroke="#1d607e" stroke-width="2.6"/></svg>
<svg style="left:1446.2px;top:846.0px" width="32" height="32" viewBox="0 0 32 32"><circle cx="16.0" cy="16.0" r="14.6" fill="#e4e4e4" stroke="#6f6f6f" stroke-width="2.6"/><circle cx="16.0" cy="19.0" r="11.0" fill="#cfcfcf" opacity="0.6"/><circle cx="16.0" cy="14.0" r="11.0" fill="#f2f2f2" opacity="0.8"/><rect x="8.0" y="10.4" width="16" height="3.8" fill="#0a0a0a"/><rect x="8.0" y="17.4" width="16" height="3.8" fill="#0a0a0a"/></svg>
<svg style="left:27.5px;top:890.8699999999999px" width="30" height="39" viewBox="0 0 30 39"><path d="M1.2,1.2 H20.8 L28.8,9.2 V37.8 H1.2 Z" fill="#f7f7f7" stroke="#9c9c9c" stroke-width="2" stroke-linejoin="round"/><path d="M20.8,1.2 V9.2 H28.8" fill="#e9e9e9" stroke="#9c9c9c" stroke-width="1.6" stroke-linejoin="round"/></svg>
<svg style="left:1248.2px;top:895.7699999999999px" width="36" height="33" viewBox="0 0 36 33"><path d="M6.8,12 V26.5 H12" fill="none" stroke="#111" stroke-width="2.6"/><polygon points="10.5,21.8 17,26.5 10.5,31.2" fill="#111"/><rect x="1.5" y="1.5" width="14.5" height="10" rx="4.5" ry="4.5" fill="#8fd0ec" stroke="#1d607e" stroke-width="2.6"/><rect x="18.5" y="21.2" width="15.8" height="10.3" rx="4.8" ry="4.8" fill="#8fd0ec" stroke="#1d607e" stroke-width="2.6"/></svg>
<svg style="left:1446.2px;top:893.5699999999999px" width="32" height="32" viewBox="0 0 32 32"><circle cx="16.0" cy="16.0" r="14.6" fill="#e4e4e4" stroke="#6f6f6f" stroke-width="2.6"/><circle cx="16.0" cy="19.0" r="11.0" fill="#cfcfcf" opacity="0.6"/><circle cx="16.0" cy="14.0" r="11.0" fill="#f2f2f2" opacity="0.8"/><rect x="8.0" y="10.4" width="16" height="3.8" fill="#0a0a0a"/><rect x="8.0" y="17.4" width="16" height="3.8" fill="#0a0a0a"/></svg>
<svg style="left:27.5px;top:938.6400000000001px" width="30" height="39" viewBox="0 0 30 39"><path d="M1.2,1.2 H20.8 L28.8,9.2 V37.8 H1.2 Z" fill="#f7f7f7" stroke="#9c9c9c" stroke-width="2" stroke-linejoin="round"/><path d="M20.8,1.2 V9.2 H28.8" fill="#e9e9e9" stroke="#9c9c9c" stroke-width="1.6" stroke-linejoin="round"/><rect x="5.5" y="9.2" width="11" height="1.8" fill="#8e8e8e"/><rect x="5.5" y="13.5" width="19" height="1.8" fill="#8e8e8e"/><rect x="5.5" y="17.8" width="19" height="1.8" fill="#8e8e8e"/><rect x="5.5" y="22.1" width="19" height="1.8" fill="#8e8e8e"/><rect x="5.5" y="26.4" width="19" height="1.8" fill="#8e8e8e"/><rect x="5.5" y="30.7" width="19" height="1.8" fill="#8e8e8e"/></svg>
<svg style="left:1248.2px;top:943.34px" width="36" height="33" viewBox="0 0 36 33"><path d="M6.8,12 V26.5 H12" fill="none" stroke="#111" stroke-width="2.6"/><polygon points="10.5,21.8 17,26.5 10.5,31.2" fill="#111"/><rect x="1.5" y="1.5" width="14.5" height="10" rx="4.5" ry="4.5" fill="#8fd0ec" stroke="#1d607e" stroke-width="2.6"/><rect x="18.5" y="21.2" width="15.8" height="10.3" rx="4.8" ry="4.8" fill="#8fd0ec" stroke="#1d607e" stroke-width="2.6"/></svg>
<svg style="left:1446.2px;top:941.1400000000001px" width="32" height="32" viewBox="0 0 32 32"><circle cx="16.0" cy="16.0" r="14.6" fill="#e4e4e4" stroke="#6f6f6f" stroke-width="2.6"/><circle cx="16.0" cy="19.0" r="11.0" fill="#cfcfcf" opacity="0.6"/><circle cx="16.0" cy="14.0" r="11.0" fill="#f2f2f2" opacity="0.8"/><rect x="8.0" y="10.4" width="16" height="3.8" fill="#0a0a0a"/><rect x="8.0" y="17.4" width="16" height="3.8" fill="#0a0a0a"/></svg>
<svg style="left:22.4px;top:985.2px;overflow:hidden" width="40" height="40" viewBox="0 0 40 40"><defs><radialGradient id="vg" cx="0.45" cy="0.45" r="0.6"><stop offset="0" stop-color="#d8d8d8"/><stop offset="1" stop-color="#5a5a5a"/></radialGradient></defs><rect x="0" y="0" width="40" height="40" fill="#161616"/><rect x="0" y="0" width="40" height="6" fill="#d9281f"/><circle cx="31" cy="31.5" r="22.5" fill="none" stroke="#f4f4f4" stroke-width="3.8"/><circle cx="31" cy="31.5" r="15.3" fill="none" stroke="#f4f4f4" stroke-width="3.4"/><circle cx="31" cy="31.5" r="9.6" fill="url(#vg)"/></svg>
<svg style="left:1248.2px;top:990.91px" width="36" height="33" viewBox="0 0 36 33"><path d="M6.8,12 V26.5 H12" fill="none" stroke="#111" stroke-width="2.6"/><polygon points="10.5,21.8 17,26.5 10.5,31.2" fill="#111"/><rect x="1.5" y="1.5" width="14.5" height="10" rx="4.5" ry="4.5" fill="#8fd0ec" stroke="#1d607e" stroke-width="2.6"/><rect x="18.5" y="21.2" width="15.8" height="10.3" rx="4.8" ry="4.8" fill="#8fd0ec" stroke="#1d607e" stroke-width="2.6"/></svg>
<svg style="left:1446.2px;top:988.71px" width="32" height="32" viewBox="0 0 32 32"><circle cx="16.0" cy="16.0" r="14.6" fill="#e4e4e4" stroke="#6f6f6f" stroke-width="2.6"/><circle cx="16.0" cy="19.0" r="11.0" fill="#cfcfcf" opacity="0.6"/><circle cx="16.0" cy="14.0" r="11.0" fill="#f2f2f2" opacity="0.8"/><rect x="8.0" y="10.4" width="16" height="3.8" fill="#0a0a0a"/><rect x="8.0" y="17.4" width="16" height="3.8" fill="#0a0a0a"/></svg>
<svg style="left:25.5px;top:1033.78px" width="32" height="39" viewBox="0 0 32 39"><path d="M1.2,1.2 H22.8 L30.8,9.2 V37.8 H1.2 Z" fill="#f7f7f7" stroke="#9c9c9c" stroke-width="2" stroke-linejoin="round"/><path d="M22.8,1.2 V9.2 H30.8" fill="#e9e9e9" stroke="#9c9c9c" stroke-width="1.6" stroke-linejoin="round"/><rect x="6" y="9.5" width="11" height="1.8" fill="#a6a6a6"/><rect x="6" y="14.5" width="19.5" height="1.8" fill="#a6a6a6"/><rect x="6" y="20.5" width="19.5" height="1.8" fill="#a6a6a6"/><rect x="6" y="25.5" width="12" height="1.8" fill="#a6a6a6"/></svg>
<svg style="left:1248.2px;top:1038.48px" width="36" height="33" viewBox="0 0 36 33"><path d="M6.8,12 V26.5 H12" fill="none" stroke="#111" stroke-width="2.6"/><polygon points="10.5,21.8 17,26.5 10.5,31.2" fill="#111"/><rect x="1.5" y="1.5" width="14.5" height="10" rx="4.5" ry="4.5" fill="#8fd0ec" stroke="#1d607e" stroke-width="2.6"/><rect x="18.5" y="21.2" width="15.8" height="10.3" rx="4.8" ry="4.8" fill="#8fd0ec" stroke="#1d607e" stroke-width="2.6"/></svg>
<svg style="left:1446.2px;top:1036.28px" width="32" height="32" viewBox="0 0 32 32"><circle cx="16.0" cy="16.0" r="14.6" fill="#e4e4e4" stroke="#6f6f6f" stroke-width="2.6"/><circle cx="16.0" cy="19.0" r="11.0" fill="#cfcfcf" opacity="0.6"/><circle cx="16.0" cy="14.0" r="11.0" fill="#f2f2f2" opacity="0.8"/><rect x="8.0" y="10.4" width="16" height="3.8" fill="#0a0a0a"/><rect x="8.0" y="17.4" width="16" height="3.8" fill="#0a0a0a"/></svg>
<div style="left:0px;top:1526px;width:3840px;height:3px;background:#eef1f6;"></div>
<div style="left:0px;top:1529px;width:3840px;height:6px;background:#ffffff;"></div>
<div style="left:0px;top:1535.5px;width:3840px;height:2.5px;background:#a9b0c3;"></div>
<div style="left:0px;top:1538px;width:3840px;height:2.5px;background:#c9cede;"></div>
<div style="left:0px;top:1540px;width:3840px;height:66px;background:#e2e6f3;"></div>
<div style="left:0px;top:1606px;width:3840px;height:2px;background:#c6cbd9;"></div>
<div style="left:0px;top:1608px;width:3840px;height:134px;background:#f8f9fd;"></div>
<div style="left:0px;top:1741px;width:3840px;height:2.5px;background:#dfe2ea;"></div>
<div style="left:0px;top:1743.5px;width:3840px;height:420px;background:#ffffff;"></div>
<div style="left:1125px;top:1547.5px;width:232px;height:60.5px;background:#f8f9fd;border:2px solid #cfd4e0;border-bottom:none;border-radius:7px 7px 0 0;box-sizing:content-box"></div>
<svg style="left:16.8px;top:1556.3px" width="42" height="40" viewBox="0 0 42 40"><path d="M3.5,1.5 H19.5 L30,12 V33.5 Q30,35.5 28,35.5 H3.5 Q1.5,35.5 1.5,33.5 V3.5 Q1.5,1.5 3.5,1.5 Z" fill="#f4f4f4" stroke="#4e4e4e" stroke-width="2.6" stroke-linejoin="round"/><path d="M19.5,1.5 V12 H30" fill="#fff" stroke="#4e4e4e" stroke-width="2" stroke-linejoin="round"/><ellipse cx="29" cy="31.4" rx="10.6" ry="7" fill="#eeeeee" stroke="#555" stroke-width="2"/><circle cx="28.4" cy="30.2" r="5.4" fill="#151515"/></svg>
<svg style="left:210.6px;top:1559.4px" width="34" height="33.5" viewBox="0 0 34 33.5"><rect x="1.2" y="1.2" width="31.6" height="31" fill="#e8e8e8" stroke="#555" stroke-width="2.4"/><rect x="6" y="6.5" width="21" height="4.2" fill="#f8f8f8" stroke="#666" stroke-width="1.4"/><rect x="6" y="15" width="11" height="3.6" fill="#f8f8f8" stroke="#666" stroke-width="1.4"/><rect x="6" y="23" width="11" height="3.6" fill="#777"/><rect x="21.5" y="15.5" width="5.5" height="11.5" fill="#ddd" stroke="#666" stroke-width="1.4"/></svg>
<svg style="left:428px;top:1558px" width="32" height="32" viewBox="0 0 32 32"><circle cx="16.0" cy="16.0" r="14.6" fill="#e4e4e4" stroke="#6f6f6f" stroke-width="2.6"/><circle cx="16.0" cy="19.0" r="11.0" fill="#cfcfcf" opacity="0.6"/><circle cx="16.0" cy="14.0" r="11.0" fill="#f2f2f2" opacity="0.8"/><rect x="8.0" y="10.4" width="16" height="3.8" fill="#0a0a0a"/><rect x="8.0" y="17.4" width="16" height="3.8" fill="#0a0a0a"/></svg>
<svg style="left:658.5px;top:1558.5px" width="34" height="34" viewBox="0 0 34 34"><rect x="1.2" y="1.2" width="31.6" height="31.6" fill="#fafafa" stroke="#444" stroke-width="2.4"/><rect x="1.2" y="1.2" width="31.6" height="5.5" fill="#4a98c9"/><path d="M1.2,7.5 H32.8 M1.2,16 H32.8 M1.2,24.5 H32.8 M12,7.5 V32.8 M22.5,7.5 V32.8" stroke="#555" stroke-width="1.8" fill="none"/><rect x="1.2" y="1.2" width="31.6" height="31.6" fill="none" stroke="#444" stroke-width="2.4"/></svg>
<svg style="left:938px;top:1558.5px" width="33" height="34" viewBox="0 0 33 34"><path d="M16.5,11 V17.5 M5.5,23 V17.5 H27.5 V23" fill="none" stroke="#333" stroke-width="2"/><rect x="9.5" y="1.2" width="14" height="10" fill="#f6f6f6" stroke="#333" stroke-width="2.2"/><rect x="1.2" y="23" width="9.5" height="9.5" fill="#7fd0ee" stroke="#1c5f80" stroke-width="2.2"/><rect x="22.3" y="23" width="9.5" height="9.5" fill="#7fd0ee" stroke="#1c5f80" stroke-width="2.2"/></svg>
<svg style="left:1138.5px;top:1558.5px" width="33" height="34" viewBox="0 0 33 34"><path d="M6,11 V17 H27 V11 M16.5,17 V22.5" fill="none" stroke="#333" stroke-width="2"/><rect x="1.2" y="1.2" width="9.5" height="9.5" fill="#f6f6f6" stroke="#333" stroke-width="2.2"/><rect x="22.3" y="1.2" width="9.5" height="9.5" fill="#f6f6f6" stroke="#333" stroke-width="2.2"/><rect x="9" y="22.5" width="15" height="10" fill="#7fd0ee" stroke="#1c5f80" stroke-width="2.2"/></svg>
<svg style="left:443px;top:1642px" width="12.4" height="6.4" viewBox="0 0 12.4 6.4"><polygon points="0,0 12.4,0 6.2,6.4" fill="#111"/></svg>
<div style="left:6.5px;top:1674.5px;width:227px;height:52px;background:#fff;border:2px solid #b9becd;border-radius:7px;box-sizing:content-box"></div>
<svg style="left:16.8px;top:1686px" width="37" height="35" viewBox="0 0 37 35"><rect x="1" y="1.5" width="5.6" height="32" fill="#f4f4f4" stroke="#333" stroke-width="2"/><path d="M6.6,13.5 H16" stroke="#333" stroke-width="2.4"/><rect x="16" y="5.6" width="19.5" height="18.8" rx="4.5" ry="4.5" fill="#f2d648" stroke="#6e5a14" stroke-width="2.6"/></svg>
<svg style="left:198.4px;top:1701.8px" width="12.4" height="6.4" viewBox="0 0 12.4 6.4"><polygon points="0,0 12.4,0 6.2,6.4" fill="#111"/></svg>
<div style="left:96.0px;top:1743.5px;width:3px;height:179px;background:#f0f0f3;"></div>
<div style="left:596.3px;top:1743.5px;width:3px;height:179px;background:#f0f0f3;"></div>
<div style="left:846.3px;top:1743.5px;width:3px;height:179px;background:#f0f0f3;"></div>
<div style="left:1221.3px;top:1743.5px;width:3px;height:179px;background:#f0f0f3;"></div>
<div style="left:1372.5px;top:1743.5px;width:3px;height:179px;background:#f0f0f3;"></div>
<div style="left:1522.5px;top:1743.5px;width:3px;height:179px;background:#f0f0f3;"></div>
<div style="left:1773.0px;top:1743.5px;width:3px;height:179px;background:#f0f0f3;"></div>
<div style="left:2274.0px;top:1743.5px;width:3px;height:179px;background:#f0f0f3;"></div>
<div style="left:2772.7px;top:1743.5px;width:3px;height:179px;background:#f0f0f3;"></div>
<div style="left:3022.7px;top:1743.5px;width:3px;height:179px;background:#f0f0f3;"></div>
<div style="left:0px;top:1861.5px;width:3025px;height:2.5px;background:#f0f0f3;"></div>
<div style="left:0px;top:1921.2px;width:3025px;height:2.5px;background:#f0f0f3;"></div>
<svg style="left:17px;top:1813.6px" width="38" height="40" viewBox="0 0 38 40"><polygon points="8,3.5 18,0.8 26.5,4 26.5,13.5 36.8,18.5 36.8,33.5 23.5,39.2 1,22 1,14 8,11.5" fill="#e6c52c"/><polygon points="8,3.5 18,0.8 26.5,4 16.8,7.8" fill="#f8ec9a"/><polygon points="16.8,7.8 26.5,4 26.5,13.5 16.8,18.5" fill="#c99e1a"/><polygon points="8,3.5 16.8,7.8 16.8,18.5 8,13" fill="#f0d545"/><polygon points="1,14 8,12 16.8,18.5 26.5,13.5 36.8,18.5 23.5,25" fill="#f5e26a"/><polygon points="23.5,25 36.8,18.5 36.8,33.5 23.5,39.2" fill="#f3de58"/><polygon points="1,14 23.5,25 23.5,39.2 1,22" fill="#dcb625"/><path d="M23.5,25 L23.5,39 M1,14 L23.5,25 L36.8,18.5 M16.8,7.8 L16.8,18.5 M8,3.5 L16.8,7.8 L26.5,4" fill="none" stroke="#8a6a10" stroke-width="1.4"/><polygon points="8,3.5 18,0.8 26.5,4 26.5,13.5 36.8,18.5 36.8,33.5 23.5,39.2 1,22 1,14 8,11.5" fill="none" stroke="#5f4708" stroke-width="2.6" stroke-linejoin="round"/></svg>
<svg style="left:116.3px;top:1833.6999999999998px" width="14" height="8" viewBox="0 0 14 8"><polygon points="0,0 14,0 7,8" fill="#111"/></svg>
<svg style="left:2298.4px;top:1816.6px" width="26.5" height="35.5" viewBox="0 0 38 52"><path d="M4,1.2 H31.5 Q35,1.2 35,4.8 V19.5 L37.2,21.8 V39.5 Q37.2,42.6 34,42.6 H18 V12 L2,5.5 Q1.6,1.2 4,1.2 Z" fill="#10c410" stroke="#0a7a0a" stroke-width="2" stroke-linejoin="round"/><path d="M1.6,5 L17.6,11 Q19.4,11.8 19.4,14 V50.8 L3,43 Q1.6,42.2 1.6,40.4 Z" fill="#55ea55" stroke="#0b870b" stroke-width="2" stroke-linejoin="round"/><path d="M4,9 L11,11.8 V38 L4,35 Z" fill="#86f886" opacity="0.7"/></svg>
<svg style="left:2794px;top:1818.6999999999998px" width="36" height="33" viewBox="0 0 36 33"><path d="M6.8,12 V26.5 H12" fill="none" stroke="#111" stroke-width="2.6"/><polygon points="10.5,21.8 17,26.5 10.5,31.2" fill="#111"/><rect x="1.5" y="1.5" width="14.5" height="10" rx="4.5" ry="4.5" fill="#8fd0ec" stroke="#1d607e" stroke-width="2.6"/><rect x="18.5" y="21.2" width="15.8" height="10.3" rx="4.8" ry="4.8" fill="#8fd0ec" stroke="#1d607e" stroke-width="2.6"/></svg>
<svg style="left:14.6px;top:1873.3999999999999px" width="41.5" height="38.7" viewBox="0 0 41.5 38.7"><polygon points="0.5,9.4 21,0.5 39.7,6.6 20.4,17.7" fill="#f2453f"/><polygon points="0.5,9.4 20.4,17.7 20.4,38 0.5,29.8" fill="#d81e1e"/><polygon points="20.4,17.7 39.7,6.6 40.8,28.7 20.4,38" fill="#9e1212"/><polygon points="0.5,9.4 21,0.5 39.7,6.6 40.8,28.7 20.4,38 0.5,29.8" fill="none" stroke="#c41a1a" stroke-width="1" stroke-linejoin="round"/><text x="2.2" y="26.5" font-size="24.5" font-weight="700" fill="#fff" transform="matrix(0.78,0.33,0,1,0,-1.5)">S</text><text x="26.5" y="42.8" font-size="25.5" font-weight="700" fill="#fff" transform="matrix(0.62,-0.36,0,1,4.6,0.5)">W</text></svg>
<svg style="left:2298.4px;top:1876.3999999999999px" width="26.5" height="35.5" viewBox="0 0 38 52"><path d="M4,1.2 H31.5 Q35,1.2 35,4.8 V19.5 L37.2,21.8 V39.5 Q37.2,42.6 34,42.6 H18 V12 L2,5.5 Q1.6,1.2 4,1.2 Z" fill="#10c410" stroke="#0a7a0a" stroke-width="2" stroke-linejoin="round"/><path d="M1.6,5 L17.6,11 Q19.4,11.8 19.4,14 V50.8 L3,43 Q1.6,42.2 1.6,40.4 Z" fill="#55ea55" stroke="#0b870b" stroke-width="2" stroke-linejoin="round"/><path d="M4,9 L11,11.8 V38 L4,35 Z" fill="#86f886" opacity="0.7"/></svg>
<svg style="left:2794px;top:1878.4999999999998px" width="36" height="33" viewBox="0 0 36 33"><path d="M6.8,12 V26.5 H12" fill="none" stroke="#111" stroke-width="2.6"/><polygon points="10.5,21.8 17,26.5 10.5,31.2" fill="#111"/><rect x="1.5" y="1.5" width="14.5" height="10" rx="4.5" ry="4.5" fill="#8fd0ec" stroke="#1d607e" stroke-width="2.6"/><rect x="18.5" y="21.2" width="15.8" height="10.3" rx="4.8" ry="4.8" fill="#8fd0ec" stroke="#1d607e" stroke-width="2.6"/></svg>
<span style="left:251.1px;top:13.6px;font-size:31px;color:#1b1b1b;transform:scaleX(0.9369);">001_Connection_Design</span>
<span style="left:46.5px;top:72.0px;font-size:30px;color:#ffffff;transform:scaleX(0.9550);">File</span>
<span style="left:174.1px;top:72.0px;font-size:30px;color:#2b2b2b;transform:scaleX(0.9374);">Home</span>
<span style="left:322.1px;top:72.0px;font-size:30px;color:#2b2b2b;transform:scaleX(0.9123);">Share</span>
<span style="left:468.0px;top:72.0px;font-size:30px;color:#2b2b2b;transform:scaleX(0.9642);">View</span>
<span style="left:367.0px;top:150.8px;font-size:31px;color:#1b1b1b;transform:scaleX(0.8693);">This PC</span>
<span style="left:518.6px;top:150.8px;font-size:31px;color:#1b1b1b;transform:scaleX(0.9378);">Local Disk (C:)</span>
<span style="left:763.1px;top:150.8px;font-size:31px;color:#1b1b1b;transform:scaleX(0.9272);">PDM_Std</span>
<span style="left:941.1px;top:150.8px;font-size:31px;color:#1b1b1b;transform:scaleX(0.8868);">001_SSM_Projects</span>
<span style="left:1231.1px;top:150.8px;font-size:31px;color:#1b1b1b;transform:scaleX(0.9369);">001_Connection_Design</span>
<span style="left:96.0px;top:250.8px;font-size:31px;color:#1b1b1b;transform:scaleX(0.9737);">Actions</span>
<span style="left:211.4px;top:250.8px;font-size:31px;color:#1b1b1b;transform:scaleX(1.0467);">Modify</span>
<span style="left:324.4px;top:250.8px;font-size:31px;color:#1b1b1b;transform:scaleX(0.9307);">Display</span>
<span style="left:439.3px;top:250.8px;font-size:31px;color:#1b1b1b;transform:scaleX(0.9044);">Tools</span>
<span style="left:13.5px;top:318.8px;font-size:31px;color:#1b1b1b;transform:scaleX(0.9943);">Name</span>
<span style="left:502.1px;top:318.8px;font-size:31px;color:#1b1b1b;transform:scaleX(0.9748);">Description</span>
<span style="left:1016.6px;top:318.8px;font-size:31px;color:#1b1b1b;transform:scaleX(0.9444);">Checked Out ...</span>
<span style="left:1247.6px;top:318.8px;font-size:31px;color:#1b1b1b;transform:scaleX(0.9267);">State</span>
<span style="left:1446.5px;top:318.8px;font-size:31px;color:#1b1b1b;transform:scaleX(0.9326);">Version N...</span>
<span style="left:1685.9px;top:318.8px;font-size:31px;color:#1b1b1b;transform:scaleX(0.8560);">Size</span>
<span style="left:1766.5px;top:318.8px;font-size:31px;color:#1b1b1b;transform:scaleX(0.9126);">Type</span>
<span style="left:2015.3px;top:318.8px;font-size:31px;color:#1b1b1b;transform:scaleX(0.9823);">Date Modified</span>
<span style="left:2266.7px;top:318.8px;font-size:31px;color:#1b1b1b;transform:scaleX(0.9495);">Checked Out In</span>
<span style="left:87.4px;top:373.6px;font-size:31px;color:#1b1b1b;transform:scaleX(0.9114);">001-001-001</span>
<span style="left:249.3px;top:373.6px;font-size:31px;color:#1b1b1b;transform:scaleX(0.8672);">_GA.SLDASM</span>
<span style="left:503.4px;top:373.6px;font-size:31px;color:#1b1b1b;transform:scaleX(0.8682);">GA</span>
<span style="left:1311.8px;top:373.6px;font-size:31px;color:#1b1b1b;transform:scaleX(0.9601);">Work...</span>
<span style="left:1507.5px;top:373.6px;font-size:31px;color:#1b1b1b;transform:scaleX(1.0036);">3/3</span>
<span style="left:1633.1px;top:373.6px;font-size:31px;color:#1b1b1b;transform:scaleX(0.8901);">8,165 ...</span>
<span style="left:1766.7px;top:373.6px;font-size:31px;color:#1b1b1b;transform:scaleX(0.8906);">SLDASM File</span>
<span style="left:2016.4px;top:373.6px;font-size:31px;color:#1b1b1b;transform:scaleX(0.9219);">20/12/2021 17:...</span>
<span style="left:87.4px;top:421.1px;font-size:31px;color:#1b1b1b;transform:scaleX(0.9114);">001-001-001</span>
<span style="left:249.3px;top:421.1px;font-size:31px;color:#1b1b1b;transform:scaleX(0.8569);">_Stable.SLDDRW</span>
<span style="left:1311.8px;top:421.1px;font-size:31px;color:#1b1b1b;transform:scaleX(0.9601);">Work...</span>
<span style="left:1506.4px;top:421.1px;font-size:31px;color:#1b1b1b;transform:scaleX(1.0288);">1/1</span>
<span style="left:1634.0px;top:421.1px;font-size:31px;color:#1b1b1b;transform:scaleX(0.8820);">4,364 ...</span>
<span style="left:1766.7px;top:421.1px;font-size:31px;color:#1b1b1b;transform:scaleX(0.8753);">SLDDRW File</span>
<span style="left:2016.4px;top:421.1px;font-size:31px;color:#1b1b1b;transform:scaleX(0.9219);">20/12/2021 14:...</span>
<span style="left:87.4px;top:468.7px;font-size:31px;color:#1b1b1b;transform:scaleX(0.9114);">001-001-001</span>
<span style="left:249.2px;top:468.7px;font-size:31px;color:#1b1b1b;transform:scaleX(0.8298);">_Stable.SLDPRT</span>
<span style="left:503.4px;top:468.7px;font-size:31px;color:#1b1b1b;transform:scaleX(0.9252);">Structure Systems Stable</span>
<span style="left:1311.8px;top:468.7px;font-size:31px;color:#1b1b1b;transform:scaleX(0.9601);">Work...</span>
<span style="left:1507.5px;top:468.7px;font-size:31px;color:#1b1b1b;transform:scaleX(1.0036);">3/3</span>
<span style="left:1633.1px;top:468.7px;font-size:31px;color:#1b1b1b;transform:scaleX(0.8901);">8,559 ...</span>
<span style="left:1766.8px;top:468.7px;font-size:31px;color:#1b1b1b;transform:scaleX(0.8362);">SLDPRT File</span>
<span style="left:2016.4px;top:468.7px;font-size:31px;color:#1b1b1b;transform:scaleX(0.9219);">20/12/2021 14:...</span>
<span style="left:87.4px;top:516.3px;font-size:31px;color:#1b1b1b;transform:scaleX(0.9114);">001-001-002</span>
<span style="left:249.3px;top:516.3px;font-size:31px;color:#1b1b1b;transform:scaleX(0.8885);">_Corner_Gusset...</span>
<span style="left:1311.8px;top:516.3px;font-size:31px;color:#1b1b1b;transform:scaleX(0.9601);">Work...</span>
<span style="left:1507.5px;top:516.3px;font-size:31px;color:#1b1b1b;transform:scaleX(1.0036);">2/2</span>
<span style="left:1642.9px;top:516.3px;font-size:31px;color:#1b1b1b;transform:scaleX(0.8676);">184 KB</span>
<span style="left:1766.8px;top:516.3px;font-size:31px;color:#1b1b1b;transform:scaleX(0.8362);">SLDPRT File</span>
<span style="left:2016.4px;top:516.3px;font-size:31px;color:#1b1b1b;transform:scaleX(0.9219);">20/12/2021 14:...</span>
<span style="left:87.4px;top:563.8px;font-size:31px;color:#1b1b1b;transform:scaleX(0.9114);">001-001-003</span>
<span style="left:249.3px;top:563.8px;font-size:31px;color:#1b1b1b;transform:scaleX(0.8631);">_Hanger.SLDPRT</span>
<span style="left:1311.8px;top:563.8px;font-size:31px;color:#1b1b1b;transform:scaleX(0.9601);">Work...</span>
<span style="left:1507.5px;top:563.8px;font-size:31px;color:#1b1b1b;transform:scaleX(1.0036);">2/2</span>
<span style="left:1643.5px;top:563.8px;font-size:31px;color:#1b1b1b;transform:scaleX(0.8613);">419 KB</span>
<span style="left:1766.8px;top:563.8px;font-size:31px;color:#1b1b1b;transform:scaleX(0.8362);">SLDPRT File</span>
<span style="left:2016.4px;top:563.8px;font-size:31px;color:#1b1b1b;transform:scaleX(0.9219);">20/12/2021 14:...</span>
<span style="left:87.4px;top:611.4px;font-size:31px;color:#1b1b1b;transform:scaleX(0.9062);">001-001-004</span>
<span style="left:249.2px;top:611.4px;font-size:31px;color:#1b1b1b;transform:scaleX(0.8479);">_Tree_Plate.SLD...</span>
<span style="left:1311.8px;top:611.4px;font-size:31px;color:#1b1b1b;transform:scaleX(0.9601);">Work...</span>
<span style="left:1507.5px;top:611.4px;font-size:31px;color:#1b1b1b;transform:scaleX(1.0036);">2/2</span>
<span style="left:1642.6px;top:611.4px;font-size:31px;color:#1b1b1b;transform:scaleX(0.8699);">249 KB</span>
<span style="left:1766.8px;top:611.4px;font-size:31px;color:#1b1b1b;transform:scaleX(0.8362);">SLDPRT File</span>
<span style="left:2016.4px;top:611.4px;font-size:31px;color:#1b1b1b;transform:scaleX(0.9219);">20/12/2021 14:...</span>
<span style="left:87.4px;top:659.0px;font-size:31px;color:#1b1b1b;transform:scaleX(0.9114);">001-001-005</span>
<span style="left:249.2px;top:659.0px;font-size:31px;color:#1b1b1b;transform:scaleX(0.8491);">_Camel.SLDPRT</span>
<span style="left:1311.8px;top:659.0px;font-size:31px;color:#1b1b1b;transform:scaleX(0.9601);">Work...</span>
<span style="left:1506.4px;top:659.0px;font-size:31px;color:#1b1b1b;transform:scaleX(1.0288);">1/1</span>
<span style="left:1640.6px;top:659.0px;font-size:31px;color:#1b1b1b;transform:scaleX(0.8917);">10,53...</span>
<span style="left:1766.8px;top:659.0px;font-size:31px;color:#1b1b1b;transform:scaleX(0.8362);">SLDPRT File</span>
<span style="left:2016.4px;top:659.0px;font-size:31px;color:#1b1b1b;transform:scaleX(0.9219);">20/12/2021 14:...</span>
<span style="left:87.4px;top:706.5px;font-size:31px;color:#1b1b1b;transform:scaleX(0.9114);">001-001-006</span>
<span style="left:249.2px;top:706.5px;font-size:31px;color:#1b1b1b;transform:scaleX(0.8489);">_Cow.SLDPRT</span>
<span style="left:1311.8px;top:706.5px;font-size:31px;color:#1b1b1b;transform:scaleX(0.9601);">Work...</span>
<span style="left:1506.4px;top:706.5px;font-size:31px;color:#1b1b1b;transform:scaleX(1.0288);">1/1</span>
<span style="left:1633.1px;top:706.5px;font-size:31px;color:#1b1b1b;transform:scaleX(0.8901);">6,030 ...</span>
<span style="left:1766.8px;top:706.5px;font-size:31px;color:#1b1b1b;transform:scaleX(0.8362);">SLDPRT File</span>
<span style="left:2016.4px;top:706.5px;font-size:31px;color:#1b1b1b;transform:scaleX(0.9219);">20/12/2021 14:...</span>
<span style="left:87.4px;top:754.1px;font-size:31px;color:#1b1b1b;transform:scaleX(0.9114);">001-001-007</span>
<span style="left:249.3px;top:754.1px;font-size:31px;color:#1b1b1b;transform:scaleX(0.8712);">_Manger.SLDPRT</span>
<span style="left:1311.8px;top:754.1px;font-size:31px;color:#1b1b1b;transform:scaleX(0.9601);">Work...</span>
<span style="left:1508.5px;top:754.1px;font-size:31px;color:#1b1b1b;transform:scaleX(0.9567);">4/4</span>
<span style="left:1643.5px;top:754.1px;font-size:31px;color:#1b1b1b;transform:scaleX(0.8613);">482 KB</span>
<span style="left:1766.8px;top:754.1px;font-size:31px;color:#1b1b1b;transform:scaleX(0.8362);">SLDPRT File</span>
<span style="left:2016.4px;top:754.1px;font-size:31px;color:#1b1b1b;transform:scaleX(0.9219);">24/12/2021 13:...</span>
<span style="left:87.4px;top:801.7px;font-size:31px;color:#1b1b1b;transform:scaleX(0.9114);">001-001-008</span>
<span style="left:249.2px;top:801.7px;font-size:31px;color:#1b1b1b;transform:scaleX(0.8420);">_Figures.SLDPRT</span>
<span style="left:1311.8px;top:801.7px;font-size:31px;color:#1b1b1b;transform:scaleX(0.9601);">Work...</span>
<span style="left:1507.5px;top:801.7px;font-size:31px;color:#1b1b1b;transform:scaleX(1.0036);">2/2</span>
<span style="left:1641.5px;top:801.7px;font-size:31px;color:#1b1b1b;transform:scaleX(0.8828);">50,77...</span>
<span style="left:1766.8px;top:801.7px;font-size:31px;color:#1b1b1b;transform:scaleX(0.8362);">SLDPRT File</span>
<span style="left:2016.4px;top:801.7px;font-size:31px;color:#1b1b1b;transform:scaleX(0.9219);">20/12/2021 14:...</span>
<span style="left:87.4px;top:849.3px;font-size:31px;color:#1b1b1b;transform:scaleX(0.9114);">001-001-009</span>
<span style="left:249.3px;top:849.3px;font-size:31px;color:#1b1b1b;transform:scaleX(0.9232);">_Simplified_GA...</span>
<span style="left:503.4px;top:849.3px;font-size:31px;color:#1b1b1b;transform:scaleX(0.9167);">Simple GA</span>
<span style="left:1311.8px;top:849.3px;font-size:31px;color:#1b1b1b;transform:scaleX(0.9601);">Work...</span>
<span style="left:1508.5px;top:849.3px;font-size:31px;color:#1b1b1b;transform:scaleX(0.9567);">4/4</span>
<span style="left:1644.3px;top:849.3px;font-size:31px;color:#1b1b1b;transform:scaleX(0.8534);">182 KB</span>
<span style="left:1766.7px;top:849.3px;font-size:31px;color:#1b1b1b;transform:scaleX(0.8906);">SLDASM File</span>
<span style="left:2016.4px;top:849.3px;font-size:31px;color:#1b1b1b;transform:scaleX(0.9219);">24/12/2021 13:...</span>
<span style="left:88.3px;top:896.8px;font-size:31px;color:#1b1b1b;transform:scaleX(0.8753);">A_001_001_BOM.xls</span>
<span style="left:1311.8px;top:896.8px;font-size:31px;color:#1b1b1b;transform:scaleX(0.9601);">Work...</span>
<span style="left:1506.4px;top:896.8px;font-size:31px;color:#1b1b1b;transform:scaleX(1.0288);">1/1</span>
<span style="left:1658.4px;top:896.8px;font-size:31px;color:#1b1b1b;transform:scaleX(0.8602);">30 KB</span>
<span style="left:1767.6px;top:896.8px;font-size:31px;color:#1b1b1b;transform:scaleX(0.8515);">XLS File</span>
<span style="left:2015.4px;top:896.8px;font-size:31px;color:#1b1b1b;transform:scaleX(0.9260);">14/12/2021 14:...</span>
<span style="left:88.3px;top:944.4px;font-size:31px;color:#1b1b1b;transform:scaleX(0.9121);">A_001-001_Notes.txt</span>
<span style="left:1311.8px;top:944.4px;font-size:31px;color:#1b1b1b;transform:scaleX(0.9601);">Work...</span>
<span style="left:1506.4px;top:944.4px;font-size:31px;color:#1b1b1b;transform:scaleX(1.0288);">1/1</span>
<span style="left:1673.3px;top:944.4px;font-size:31px;color:#1b1b1b;transform:scaleX(0.8601);">1 KB</span>
<span style="left:1767.6px;top:944.4px;font-size:31px;color:#1b1b1b;transform:scaleX(0.9559);">Text Document</span>
<span style="left:2015.4px;top:944.4px;font-size:31px;color:#1b1b1b;transform:scaleX(0.9260);">14/12/2021 14:...</span>
<span style="left:88.3px;top:992.0px;font-size:31px;color:#1b1b1b;transform:scaleX(0.8682);">A_001-001_SOLIDWORKS_V...</span>
<span style="left:1311.8px;top:992.0px;font-size:31px;color:#1b1b1b;transform:scaleX(0.9601);">Work...</span>
<span style="left:1506.4px;top:992.0px;font-size:31px;color:#1b1b1b;transform:scaleX(1.0288);">1/1</span>
<span style="left:1641.5px;top:992.0px;font-size:31px;color:#1b1b1b;transform:scaleX(0.8828);">369,6...</span>
<span style="left:1766.7px;top:992.0px;font-size:31px;color:#1b1b1b;transform:scaleX(0.8606);">SOLIDWORKS ...</span>
<span style="left:2015.4px;top:992.0px;font-size:31px;color:#1b1b1b;transform:scaleX(0.9260);">14/12/2021 14:...</span>
<span style="left:88.3px;top:1039.5px;font-size:31px;color:#1b1b1b;transform:scaleX(0.9141);">A_001-001-001_Sustainabili...</span>
<span style="left:1311.8px;top:1039.5px;font-size:31px;color:#1b1b1b;transform:scaleX(0.9601);">Work...</span>
<span style="left:1506.4px;top:1039.5px;font-size:31px;color:#1b1b1b;transform:scaleX(1.0288);">1/1</span>
<span style="left:1642.6px;top:1039.5px;font-size:31px;color:#1b1b1b;transform:scaleX(0.8699);">340 KB</span>
<span style="left:1766.7px;top:1039.5px;font-size:31px;color:#1b1b1b;transform:scaleX(0.9226);">OOXML Text D...</span>
<span style="left:2015.4px;top:1039.5px;font-size:31px;color:#1b1b1b;transform:scaleX(0.9260);">14/12/2021 14:...</span>
<span style="left:71.5px;top:1560.3px;font-size:29.5px;color:#3f4e70;transform:scaleX(0.9583);">Preview</span>
<span style="left:262.6px;top:1560.3px;font-size:29.5px;color:#3f4e70;transform:scaleX(0.9371);">Data Card</span>
<span style="left:480.2px;top:1560.3px;font-size:29.5px;color:#3f4e70;transform:scaleX(0.9470);">Version 4/4</span>
<span style="left:710.3px;top:1560.3px;font-size:29.5px;color:#3f4e70;transform:scaleX(0.9571);">Bill of Materials</span>
<span style="left:990.4px;top:1560.3px;font-size:29.5px;color:#3f4e70;transform:scaleX(0.9391);">Contains</span>
<span style="left:1193.2px;top:1560.3px;font-size:29.5px;color:#5a5a5a;transform:scaleX(0.9351);">Where Used</span>
<span style="left:65.2px;top:1628.0px;font-size:29.5px;color:#303030;transform:scaleX(0.9367);">Version: 3 ("&lt;No comment&gt;")</span>
<span style="left:66.6px;top:1688.3px;font-size:29.5px;color:#4736b5;transform:scaleX(0.9564);">Transport</span>
<span style="left:16.8px;top:1756.8px;font-size:31px;color:#111;font-weight:700;-webkit-text-stroke:0;transform:scaleX(0.9082);">Type</span>
<span style="left:114.4px;top:1756.8px;font-size:31px;color:#111;font-weight:700;-webkit-text-stroke:0;transform:scaleX(0.9445);">File Name</span>
<span style="left:616.3px;top:1756.8px;font-size:31px;color:#111;font-weight:700;-webkit-text-stroke:0;transform:scaleX(0.9320);">Warnings</span>
<span style="left:864.3px;top:1756.8px;font-size:31px;color:#111;font-weight:700;-webkit-text-stroke:0;transform:scaleX(0.9433);">Configuration name</span>
<span style="left:1240.9px;top:1756.8px;font-size:31px;color:#111;font-weight:700;-webkit-text-stroke:0;transform:scaleX(0.9443);">Quantity</span>
<span style="left:1391.3px;top:1756.8px;font-size:31px;color:#111;font-weight:700;-webkit-text-stroke:0;transform:scaleX(0.9157);">Version</span>
<span style="left:1540.9px;top:1756.8px;font-size:31px;color:#111;font-weight:700;-webkit-text-stroke:0;transform:scaleX(0.9379);">Checked Out ...</span>
<span style="left:1789.8px;top:1756.8px;font-size:31px;color:#111;font-weight:700;-webkit-text-stroke:0;transform:scaleX(0.9568);">Checked Out In</span>
<span style="left:2291.1px;top:1756.8px;font-size:31px;color:#111;font-weight:700;-webkit-text-stroke:0;transform:scaleX(0.9257);">Found In</span>
<span style="left:2792.2px;top:1756.8px;font-size:31px;color:#111;font-weight:700;-webkit-text-stroke:0;transform:scaleX(0.9846);">State</span>
<span style="left:154.5px;top:1819.6px;font-size:31px;color:#1b1b1b;transform:scaleX(0.9120);">001-001-007</span>
<span style="left:316.4px;top:1819.6px;font-size:31px;color:#1b1b1b;transform:scaleX(0.8887);">_Manger.SLDPRT</span>
<span style="left:865.2px;top:1819.6px;font-size:31px;color:#1b1b1b;transform:scaleX(0.9477);">Transport</span>
<span style="left:1238.5px;top:1819.6px;font-size:31px;color:#1b1b1b;">1</span>
<span style="left:1391.3px;top:1819.6px;font-size:31px;color:#111;font-weight:700;-webkit-text-stroke:0;transform:scaleX(1.0535);">3/4</span>
<span style="left:2341.6px;top:1819.6px;font-size:31px;color:#1b1b1b;transform:scaleX(0.9415);">C:\PDM_Std\0...ection_Design</span>
<span style="left:2842.2px;top:1819.6px;font-size:31px;color:#1b1b1b;transform:scaleX(0.9612);">Work in Pr...</span>
<span style="left:195.3px;top:1879.4px;font-size:31px;color:#1b1b1b;transform:scaleX(0.9120);">001-001-009</span>
<span style="left:357.2px;top:1879.4px;font-size:31px;color:#1b1b1b;transform:scaleX(0.9185);">_Simplified_GA...</span>
<span style="left:863.3px;top:1879.4px;font-size:31px;color:#1b1b1b;transform:scaleX(0.9730);">Default</span>
<span style="left:1238.5px;top:1879.4px;font-size:31px;color:#1b1b1b;">1</span>
<span style="left:1391.3px;top:1879.4px;font-size:31px;color:#111;font-weight:700;-webkit-text-stroke:0;transform:scaleX(1.0535);">3/4</span>
<span style="left:2341.6px;top:1879.4px;font-size:31px;color:#1b1b1b;transform:scaleX(0.9415);">C:\PDM_Std\0...ection_Design</span>
<span style="left:2842.2px;top:1879.4px;font-size:31px;color:#1b1b1b;transform:scaleX(0.9612);">Work in Pr...</span>
<svg style="left:355px;top:1963.5px" width="33" height="49" viewBox="0 0 33 49"><path d="M1.5,1.2 V41.4 L11.6,33.3 L17.6,46.6 L24,44 L18.5,31.6 L29.8,30 Z" fill="#fff" stroke="#2a2a2a" stroke-width="2" stroke-linejoin="round"/></svg>
</body></html>
